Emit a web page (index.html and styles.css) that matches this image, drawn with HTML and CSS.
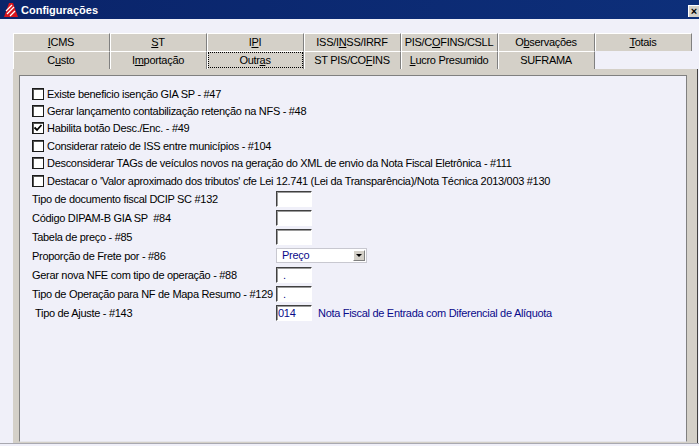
FILE: index.html
```html
<!DOCTYPE html>
<html lang="pt">
<head>
  <meta charset="utf-8">
  <title>Configurações</title>
  <link rel="stylesheet" href="styles.css">
</head>
<body>
  <div class="titlebar">
    <svg class="app-icon" viewBox="0 0 16 16">
      <polygon points="1,15 6,1 10,1 15,15" fill="#d8141c"/>
      <polyline points="3,9 9,3" stroke="#fff" stroke-width="1.2" fill="none"/>
      <polyline points="4,12 11,5" stroke="#fff" stroke-width="1.2" fill="none"/>
      <polyline points="7,14 12,9" stroke="#fff" stroke-width="1.2" fill="none"/>
    </svg>
    <span class="title">Configurações</span>
    <span class="close">×</span>
  </div>

  <div class="client">
    <div class="tab-row">
      <div class="tab"><span class="u">I</span>CMS</div>
      <div class="tab"><span class="u">S</span>T</div>
      <div class="tab">I<span class="u">P</span>I</div>
      <div class="tab">ISS/I<span class="u">N</span>SS/IRRF</div>
      <div class="tab">PIS/C<span class="u">O</span>FINS/CSLL</div>
      <div class="tab">O<span class="u">b</span>servações</div>
      <div class="tab"><span class="u">T</span>otais</div>
    </div>
    <div class="tab-row">
      <div class="tab">C<span class="u">u</span>sto</div>
      <div class="tab">I<span class="u">m</span>portação</div>
      <div class="tab active">Outr<span class="u">a</span>s</div>
      <div class="tab">ST PIS/CO<span class="u">F</span>INS</div>
      <div class="tab"><span class="u">L</span>ucro Presumido</div>
      <div class="tab">SUFRAMA</div>
    </div>

    <div class="sheet">
      <div class="panel">
        <div class="check"><span class="box"></span>Existe beneficio isenção GIA SP - #47</div>
        <div class="check"><span class="box"></span>Gerar lançamento contabilização retenção na NFS - #48</div>
        <div class="check"><span class="box">
          <svg viewBox="0 0 10 10"><polyline points="1.5,4.5 4,7 8.5,2" stroke="#000" stroke-width="1.8" fill="none"/></svg>
        </span>Habilita botão Desc./Enc. - #49</div>
        <div class="check"><span class="box"></span>Considerar rateio de ISS entre municípios - #104</div>
        <div class="check"><span class="box"></span>Desconsiderar TAGs de veículos novos na geração do XML de envio da Nota Fiscal Eletrônica - #111</div>
        <div class="check"><span class="box"></span>Destacar o 'Valor aproximado dos tributos' cfe Lei 12.741 (Lei da Transparência)/Nota Técnica 2013/003 #130</div>

        <div class="fields">
          <div class="field"><span class="label">Tipo de documento fiscal DCIP SC #132</span><span class="input"></span></div>
          <div class="field"><span class="label">Código DIPAM-B GIA SP&nbsp; #84</span><span class="input"></span></div>
          <div class="field"><span class="label">Tabela de preço - #85</span><span class="input"></span></div>
          <div class="field">
            <span class="label">Proporção de Frete por - #86</span>
            <span class="select"><span class="select-text">Preço</span><span class="drop"><span class="arrow"></span></span></span>
          </div>
          <div class="field"><span class="label">Gerar nova NFE com tipo de operação - #88</span><span class="input dot">.</span></div>
          <div class="field"><span class="label">Tipo de Operação para NF de Mapa Resumo - #129</span><span class="input dot">.</span></div>
          <div class="field">
            <span class="label indent">Tipo de Ajuste - #143</span><span class="input code">014</span>
            <span class="desc">Nota Fiscal de Entrada com Diferencial de Alíquota</span>
          </div>
        </div>
      </div>
    </div>
  </div>
</body>
</html>
```

FILE: styles.css
```css
body {
  margin: 0;
  width: 699px;
  height: 446px;
  overflow: hidden;
  background: #f0f0f9;
  font-family: "Liberation Sans", Arial, sans-serif;
  font-size: 11px;
  color: #000;
}

.titlebar {
  height: 19px;
  background: linear-gradient(90deg, #0a246a, #0d2f7a);
  color: #fff;
  display: flex;
  align-items: center;
}
.app-icon {
  width: 16px;
  height: 16px;
  margin: 0 2px 0 3px;
}
.title {
  flex: 1;
  font-weight: bold;
}
.close {
  align-self: flex-start;
  margin-top: 5px;
  width: 10px;
  height: 11px;
  background: #d4d0c8;
  border-top: 1px solid #fff;
  border-left: 1px solid #fff;
  color: #000;
  font-size: 11px;
  font-weight: bold;
  line-height: 10px;
  text-align: center;
}

.client {
  height: 425px;
  box-sizing: border-box;
  padding: 14px 1px 0 13px;
  border-bottom: 1px solid #a8a8b0;
  display: flex;
  flex-direction: column;
  letter-spacing: -0.3px;
  white-space: nowrap;
}

.tab-row {
  display: grid;
  grid-template-columns: repeat(7, 97px);
  height: 18px;
}
.tab {
  background: #d4d0c8;
  border-top: 1px solid #fff;
  border-right: 1px solid #808080;
  box-shadow: inset 1px 0 #fff;
  text-align: center;
  line-height: 17px;
}
.tab.active {
  outline: 1px dotted #000;
  outline-offset: -2px;
}
.u {
  text-decoration: underline;
}

.sheet {
  flex: 1;
  background: #d4d0c8;
  border-right: 1px solid #404040;
  padding: 6px 10px 1px 6px;
  display: flex;
}
.panel {
  flex: 1;
  background: #f0f0f9;
  border: 1px solid #808080;
  border-bottom-color: #e4e4ea;
  padding: 9px 0 0 12px;
}

.check {
  display: flex;
  align-items: center;
  gap: 3px;
  height: 17.4px;
}
.box {
  width: 12px;
  height: 12px;
  box-sizing: border-box;
  background: #fff;
  border: 1px solid #1a1a1a;
  box-shadow: inset 1px 1px 0 #555;
  display: flex;
}
.box svg {
  width: 10px;
  height: 10px;
}

.field {
  display: flex;
  align-items: center;
  height: 19px;
}
.label {
  width: 244px;
  flex: none;
}
.label.indent {
  width: 241px;
  padding-left: 3px;
}
.input {
  width: 36px;
  height: 16px;
  box-sizing: border-box;
  background: #fff;
  border: 1px solid;
  border-color: #404040 #fff #fff #404040;
  box-shadow: inset 1px 1px 0 #9a9a9a;
  color: #0a0a8a;
  line-height: 14px;
}
.input.dot {
  padding-left: 6px;
}
.input.code {
  padding-left: 1px;
}
.desc {
  margin-left: 6px;
  color: #0a0a8a;
}

.select {
  width: 91px;
  height: 15px;
  box-sizing: border-box;
  border: 1px solid #c8c8d0;
  background: #fff;
  display: flex;
}
.select-text {
  flex: 1;
  padding-left: 5px;
  color: #0a0a8a;
  line-height: 13px;
}
.drop {
  width: 12px;
  margin: 1px;
  background: #d4d0c8;
  border: 1px solid;
  border-color: #fff #808080 #808080 #fff;
  box-sizing: border-box;
  display: flex;
  align-items: center;
  justify-content: center;
}
.arrow {
  border-top: 3px solid #000;
  border-left: 3px solid transparent;
  border-right: 3px solid transparent;
}
```
